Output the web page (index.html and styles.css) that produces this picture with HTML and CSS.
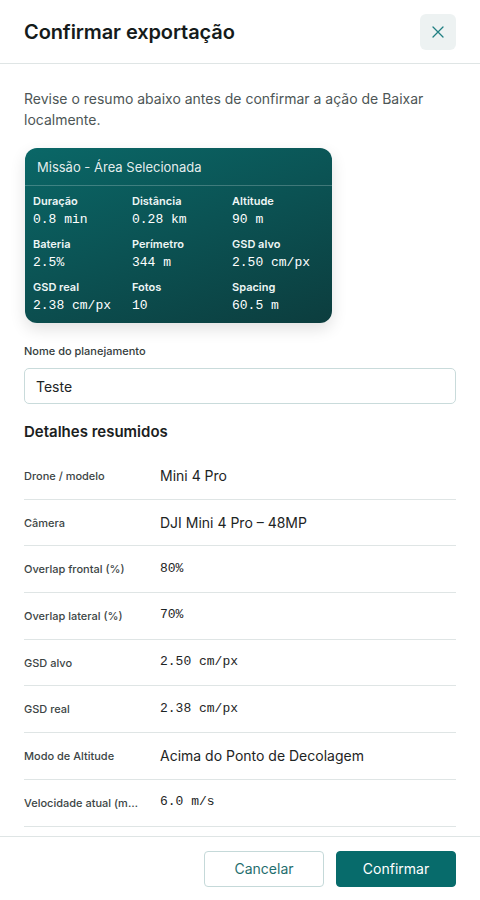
FILE: index.html
```html
<!DOCTYPE html>
<html lang="pt-BR">
<head>
<meta charset="utf-8">
<title>Confirmar exportação</title>
<link rel="stylesheet" href="styles.css">
</head>
<body>
<div class="dialog">
  <header class="dialog-header">
    <h1 class="dialog-title">Confirmar exportação</h1>
    <button class="close-btn" aria-label="Fechar">
      <svg width="12" height="12" viewBox="0 0 12 12"><path d="M1 1L11 11M11 1L1 11" stroke="#1f7f82" stroke-width="1.3" fill="none" stroke-linecap="round"/></svg>
    </button>
  </header>

  <main class="dialog-body">
    <p class="intro">Revise o resumo abaixo antes de confirmar a ação de Baixar localmente.</p>

    <section class="mission-card">
      <div class="mission-title">Missão - Área Selecionada</div>
      <div class="mission-grid">
        <div class="stat"><span class="stat-label">Duração</span><span class="stat-value">0.8 min</span></div>
        <div class="stat"><span class="stat-label">Distância</span><span class="stat-value">0.28 km</span></div>
        <div class="stat"><span class="stat-label">Altitude</span><span class="stat-value">90 m</span></div>
        <div class="stat"><span class="stat-label">Bateria</span><span class="stat-value">2.5%</span></div>
        <div class="stat"><span class="stat-label">Perímetro</span><span class="stat-value">344 m</span></div>
        <div class="stat"><span class="stat-label">GSD alvo</span><span class="stat-value">2.50 cm/px</span></div>
        <div class="stat"><span class="stat-label">GSD real</span><span class="stat-value">2.38 cm/px</span></div>
        <div class="stat"><span class="stat-label">Fotos</span><span class="stat-value">10</span></div>
        <div class="stat"><span class="stat-label">Spacing</span><span class="stat-value">60.5 m</span></div>
      </div>
    </section>

    <label class="field-label" for="plan-name">Nome do planejamento</label>
    <input class="field-input" id="plan-name" type="text" value="Teste">

    <h2 class="section-title">Detalhes resumidos</h2>

    <dl class="details">
      <div class="row"><dt>Drone / modelo</dt><dd>Mini 4 Pro</dd></div>
      <div class="row"><dt>Câmera</dt><dd>DJI Mini 4 Pro – 48MP</dd></div>
      <div class="row"><dt>Overlap frontal (%)</dt><dd class="mono">80%</dd></div>
      <div class="row"><dt>Overlap lateral (%)</dt><dd class="mono">70%</dd></div>
      <div class="row"><dt>GSD alvo</dt><dd class="mono">2.50 cm/px</dd></div>
      <div class="row"><dt>GSD real</dt><dd class="mono">2.38 cm/px</dd></div>
      <div class="row"><dt>Modo de Altitude</dt><dd>Acima do Ponto de Decolagem</dd></div>
      <div class="row"><dt>Velocidade atual (m/s)</dt><dd class="mono">6.0 m/s</dd></div>
    </dl>
  </main>

  <footer class="dialog-footer">
    <button class="btn btn-secondary">Cancelar</button>
    <button class="btn btn-primary">Confirmar</button>
  </footer>
</div>
</body>
</html>
```
FILE: styles.css
```css
* { box-sizing: border-box; }

html, body {
  margin: 0;
  padding: 0;
  height: 100%;
  background: #ffffff;
}

body {
  font-family: Inter, "Noto Sans", sans-serif;
  color: #1d2424;
}

.dialog {
  display: flex;
  flex-direction: column;
  width: 480px;
  height: 900px;
  background: #fff;
}

.dialog-header {
  flex: none;
  height: 64px;
  display: flex;
  align-items: center;
  justify-content: space-between;
  padding: 0 24px;
  border-bottom: 1px solid #dfe5e5;
}

.dialog-title {
  margin: 0;
  font-size: 20px;
  font-weight: 600;
  letter-spacing: -0.1px;
  color: #151b1b;
}

.close-btn {
  width: 36px;
  height: 36px;
  border: none;
  border-radius: 6px;
  background: #edf2f2;
  display: flex;
  align-items: center;
  justify-content: center;
  padding: 0;
  margin-top: 1px;
}

.dialog-body {
  flex: 1;
  overflow: hidden;
  padding: 24px 24px 0;
}

.intro {
  margin: 0 0 18px;
  font-size: 14px;
  line-height: 21px;
  color: #4d5656;
}

.mission-card {
  width: 307px;
  margin-left: 1px;
  border-radius: 12px;
  background: linear-gradient(160deg, #0a6767 0%, #0b5253 50%, #0c3d3e 100%);
  box-shadow: 0 6px 16px rgba(0, 0, 0, 0.12);
  color: #fff;
  overflow: hidden;
}

.mission-title {
  height: 38px;
  display: flex;
  align-items: center;
  padding: 0 12px;
  font-size: 13px;
  color: rgba(255, 255, 255, 0.9);
  border-bottom: 1px solid rgba(255, 255, 255, 0.22);
}

.mission-grid {
  display: grid;
  grid-template-columns: 99px 100px 1fr;
  row-gap: 9px;
  padding: 8px 8px 9px;
}

.stat {
  display: flex;
  flex-direction: column;
}

.stat-label {
  font-size: 11px;
  font-weight: 600;
  line-height: 15px;
  color: #eef6f6;
}

.stat-value {
  font-family: "Liberation Mono", "DejaVu Sans Mono", monospace;
  font-size: 13px;
  line-height: 17px;
  margin-top: 2px;
  color: #fff;
}

.field-label {
  display: block;
  margin-top: 21px;
  font-size: 11px;
  font-weight: 500;
  color: #343c3c;
}

.field-input {
  display: block;
  width: 100%;
  height: 36px;
  margin-top: 10px;
  padding: 0 11px;
  border: 1px solid #c9dbdb;
  border-radius: 5px;
  font-family: inherit;
  font-size: 14px;
  color: #1d2424;
  background: #fff;
}

.section-title {
  margin: 18px 0 0;
  font-size: 15px;
  font-weight: 600;
  line-height: 20px;
  color: #1a2020;
}

.details {
  margin: 11px 0 0;
}

.row {
  display: flex;
  align-items: center;
  height: 46.7px;
  border-bottom: 1px solid #dfe5e5;
}

.row dt {
  width: 117px;
  flex: none;
  margin-right: 19px;
  font-size: 11px;
  font-weight: 500;
  color: #3c4545;
  white-space: nowrap;
  overflow: hidden;
  text-overflow: ellipsis;
}

.row dd {
  margin: 0;
  font-size: 14px;
  color: #1d2424;
}

.row dd.mono {
  font-family: "Liberation Mono", "DejaVu Sans Mono", monospace;
  font-size: 13px;
  margin-top: -2px;
}

.dialog-footer {
  flex: none;
  height: 64px;
  display: flex;
  justify-content: flex-end;
  align-items: center;
  gap: 12px;
  padding: 0 24px;
  border-top: 1px solid #dfe5e5;
  background: #fff;
}

.btn {
  width: 120px;
  height: 36px;
  border-radius: 4px;
  font-family: inherit;
  font-size: 14px;
  cursor: pointer;
}

.btn-secondary {
  background: #fff;
  border: 1px solid #c5d9d9;
  color: #1f6e6e;
}

.btn-primary {
  background: #076b6b;
  border: 1px solid #076b6b;
  color: #fff;
}
```
